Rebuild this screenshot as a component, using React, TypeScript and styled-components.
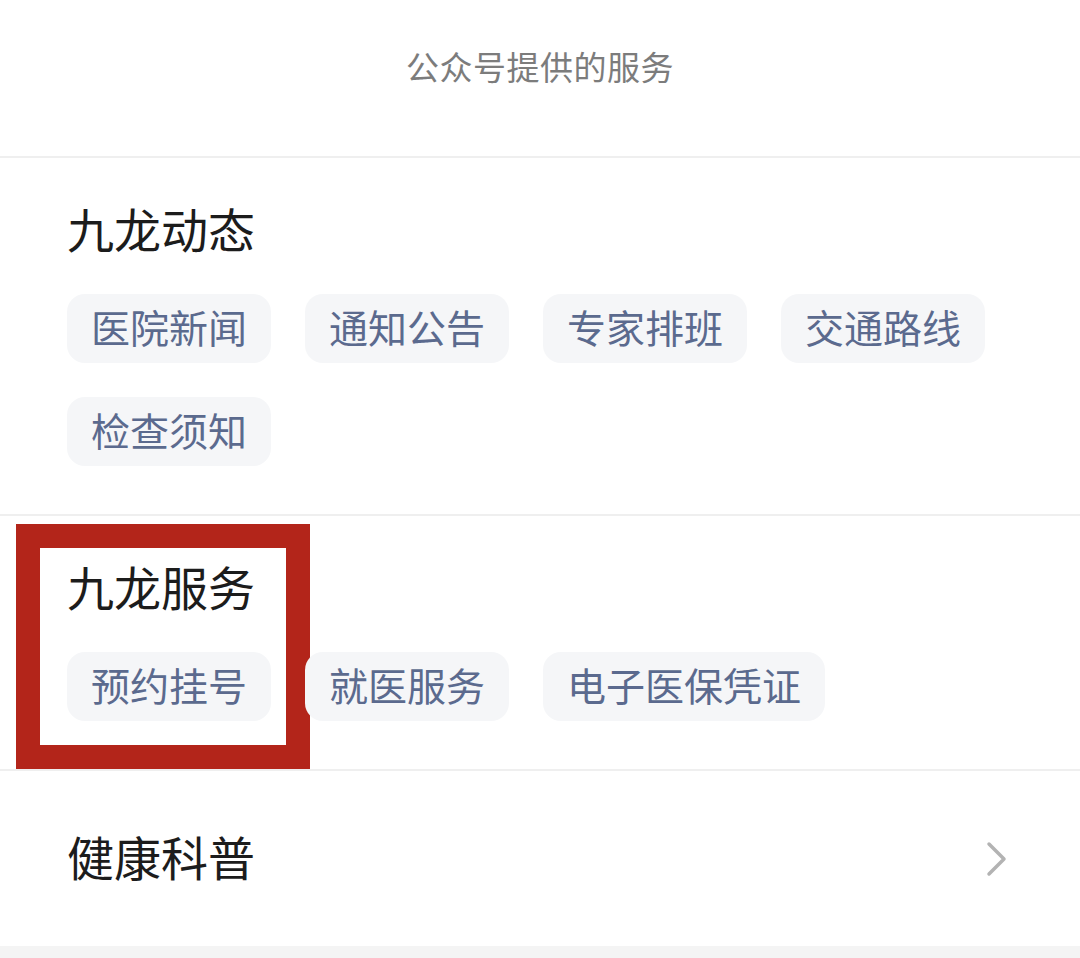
import React from "react";
import styled, { createGlobalStyle } from "styled-components";

const Global = createGlobalStyle`
  html, body { margin: 0; padding: 0; background: #ffffff; }
  body { font-family: "Noto Sans CJK SC", "Noto Sans", sans-serif; }
  * { box-sizing: border-box; }
`;

const Page = styled.div`
  width: 1080px;
  height: 958px;
  display: flex;
  flex-direction: column;
  background: #ffffff;
  overflow: hidden;
`;

const Header = styled.div`
  height: 156px;
  display: flex;
  align-items: center;
  justify-content: center;
  font-size: 33px;
  color: #7c7c7c;
  letter-spacing: 0.5px;
  padding-bottom: 24px;
`;

const Divider = styled.div`
  height: 2px;
  background: #efefef;
`;

const Section = styled.section<{ $bottom: number }>`
  position: relative;
  padding: 45px 0 ${(p) => p.$bottom}px 67px;
  display: flex;
  flex-direction: column;
  gap: 41px;
`;

const Title = styled.h2`
  margin: 0;
  font-size: 47px;
  line-height: 50px;
  font-weight: 400;
  color: #1c1c1c;
  position: relative;
  z-index: 1;
`;

const ChipGrid = styled.div`
  display: flex;
  flex-wrap: wrap;
  gap: 34px 34px;
  width: 960px;
  position: relative;
  z-index: 1;
`;

const Chip = styled.div`
  height: 69px;
  padding: 0 24px 5px;
  display: flex;
  align-items: center;
  background: #f5f6f8;
  border-radius: 18px;
  font-size: 39px;
  color: #5b6a8e;
  white-space: nowrap;
`;

const Highlight = styled.div`
  position: absolute;
  left: 16px;
  top: 8px;
  width: 294px;
  height: 245px;
  border: 24px solid #b3251a;
  pointer-events: none;
  z-index: 0;
`;

const LinkRow = styled.div`
  height: 175px;
  display: flex;
  align-items: center;
  justify-content: space-between;
  padding: 0 72px 6px 67px;
`;

const LinkTitle = styled.span`
  font-size: 47px;
  color: #1c1c1c;
`;

const Footer = styled.div`
  flex: 1;
  background: #f4f4f4;
`;

const Chevron = () => (
  <svg width="22" height="36" viewBox="0 0 22 36" fill="none" style={{ marginTop: 6 }}>
    <path d="M3 3 L18 18 L3 33" stroke="#b3b3b3" strokeWidth="3.5" strokeLinecap="round" strokeLinejoin="round" />
  </svg>
);

const news = ["医院新闻", "通知公告", "专家排班", "交通路线", "检查须知"];
const services = ["预约挂号", "就医服务", "电子医保凭证"];

export default function App() {
  return (
    <Page>
      <Global />
      <Header>公众号提供的服务</Header>
      <Divider />
      <Section $bottom={48}>
        <Title>九龙动态</Title>
        <ChipGrid>
          {news.map((n) => (
            <Chip key={n}>{n}</Chip>
          ))}
        </ChipGrid>
      </Section>
      <Divider />
      <Section $bottom={48}>
        <Highlight />
        <Title>九龙服务</Title>
        <ChipGrid>
          {services.map((n) => (
            <Chip key={n}>{n}</Chip>
          ))}
        </ChipGrid>
      </Section>
      <Divider />
      <LinkRow>
        <LinkTitle>健康科普</LinkTitle>
        <Chevron />
      </LinkRow>
      <Footer />
    </Page>
  );
}
